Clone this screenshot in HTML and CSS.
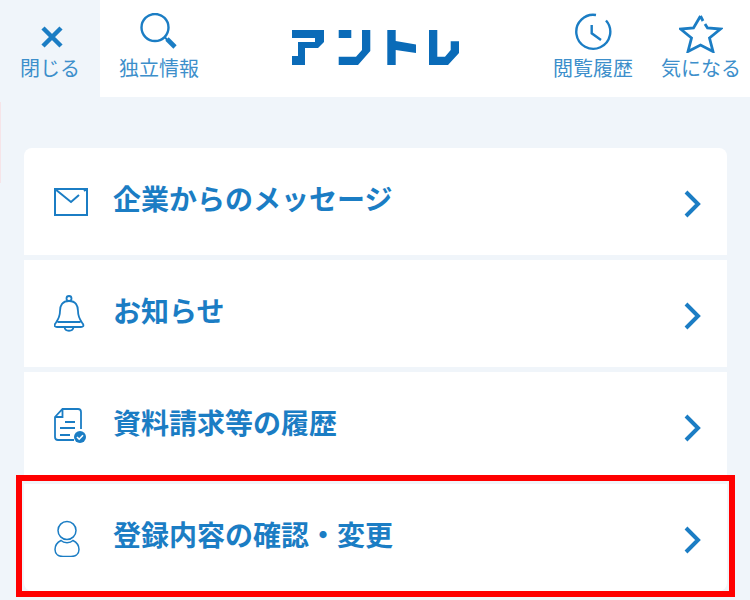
FILE: index.html
```html
<!DOCTYPE html>
<html lang="ja">
<head>
<meta charset="utf-8">
<title>メニュー</title>
<link rel="stylesheet" href="styles.css">
</head>
<body>
<header class="header">
  <a class="nav-item nav-close">
    <svg class="nav-icon" width="40" height="40" viewBox="0 0 40 40"><path d="M13 15 31 33M31 15 13 33" class="st" stroke-width="4.500"/></svg>
    <span>閉じる</span>
  </a>
  <a class="nav-item nav-search">
    <svg class="nav-icon" width="40" height="40" viewBox="0 0 40 40"><circle cx="16" cy="14.500" r="13.500" class="st" stroke-width="2.400"/><path d="M25.500 24 29 27.500" class="st" stroke-width="2"/><path d="M28 26 36 34" class="st" stroke-width="4.600"/></svg>
    <span>独立情報</span>
  </a>
  <div class="logo-wrap">
    <svg class="logo" width="168" height="36" viewBox="0 0 168 36"><path class="logo-f" d="M0 0H32V12L26 18H13V35H0V26H6V12H23V8H0Z"/><path class="logo-f" d="M46.700 0H59.300V8H46.700ZM70 0H78.300V21L66 35H46.700V26.700H64L70 20Z"/><path class="logo-f" d="M95.300 0H103.700V11L124 14.500V23L103.700 20V35H95.300Z"/><path class="logo-f" d="M137 0H145.300V26.700H153L158.700 20V11.300H167V23L156 35H137Z"/></svg>
  </div>
  <a class="nav-item nav-history">
    <svg class="nav-icon" width="40" height="40" viewBox="0 0 40 40"><path d="M33 7.500A17 17 0 1 1 23 2" class="st" stroke-width="2.400"/><path d="M18.700 12V20.300L28 27" class="st" stroke-width="2.400"/></svg>
    <span>閲覧履歴</span>
  </a>
  <a class="nav-item nav-fav">
    <svg class="nav-icon" width="44" height="40" viewBox="0 0 44 40"><path d="M21.500 3 14.500 15 1.500 16 12.500 25 9 38.500 21.500 32 34 38.500 30.500 25 41.500 16 28.500 15 26 11M21.500 3 24 8" class="st" stroke-width="2.800"/></svg>
    <span>気になる</span>
  </a>
</header>
<main class="list">
  <a class="row">
    <svg class="row-icon" width="36" height="30" viewBox="1 0 36 30"><path d="M2 2H34V28H2ZM2 2 18 15 26 8M31 4 34 2" class="st" stroke-width="2"/></svg>
    <span class="label">企業からのメッセージ</span>
    <svg class="chev" width="20" height="28" viewBox="0 0 20 28"><path d="M3 2 15 14 3 26" class="st" stroke-width="4"/></svg>
  </a>
  <a class="row">
    <svg class="row-icon" width="36" height="40" viewBox="3 0 36 40"><circle cx="18" cy="4.500" r="2.500" class="st" stroke-width="1.800"/><path d="M18 7C11 7 9 12 9 17 9 24 6 27 4 30 3 32 4 33 6 33H30C32 33 33 32 32 30 30 27 27 24 27 17 27 12 25 7 18 7ZM6.500 28H29.500M13.500 33C14 38 22 38 22.500 33" class="st" stroke-width="1.800"/></svg>
    <span class="label">お知らせ</span>
    <svg class="chev" width="20" height="28" viewBox="0 0 20 28"><path d="M3 2 15 14 3 26" class="st" stroke-width="4"/></svg>
  </a>
  <a class="row">
    <svg class="row-icon" width="33" height="36" viewBox="0 0 33 36"><path d="M20 32H4C2 32 1 31 1 29V9L8.500 1H24C26 1 27 2 27 4V21M1 9H8.500V1M11 14H21M6 20H21M6 27H16" class="st" stroke-width="1.800"/><circle cx="26" cy="29" r="6" class="fill"/><path d="M23 29 25.200 31.200 29 27.200" class="st-w" stroke-width="1.600"/></svg>
    <span class="label">資料請求等の履歴</span>
    <svg class="chev" width="20" height="28" viewBox="0 0 20 28"><path d="M3 2 15 14 3 26" class="st" stroke-width="4"/></svg>
  </a>
  <a class="row">
    <svg class="row-icon" width="26" height="38" viewBox="0 -1.500 26 38"><circle cx="13" cy="10" r="9" class="st" stroke-width="1.500"/><path d="M7 20C3 22 1 26 1 29 1 34 5 36 9 36H17C21 36 25 34 25 29 25 26 23 22 19 20 16 23 10 23 7 20Z" class="st" stroke-width="1.500"/></svg>
    <span class="label">登録内容の確認・変更</span>
    <svg class="chev" width="20" height="28" viewBox="0 0 20 28"><path d="M3 2 15 14 3 26" class="st" stroke-width="4"/></svg>
  </a>
</main>
<div class="highlight"></div>
<div class="edge-mark"></div>
</body>
</html>
```
FILE: styles.css
```css
* { box-sizing: border-box; }
html, body { margin: 0; padding: 0; }
body {
  width: 750px;
  height: 600px;
  overflow: hidden;
  position: relative;
  background: #f0f5fa;
  font-family: "Noto Sans CJK JP", "Noto Sans", sans-serif;
  color: #1b7dc4;
}
.header {
  display: flex;
  height: 97px;
  background: #fff;
}
.nav-item {
  flex: none;
  display: flex;
  flex-direction: column;
  align-items: center;
  padding-top: 13px;
  font-size: 20px;
  line-height: 26px;
  color: #3d8fcb;
  white-space: nowrap;
}
.nav-icon { display: block; margin-bottom: 2px; }
.nav-close { width: 100px; background: #f0f5fa; }
.nav-search { width: 80px; margin-left: 19px; }
.nav-history { width: 80px; }
.nav-fav { width: 80px; margin-left: 28px; margin-right: 9px; }
.logo-wrap { flex: 1; padding: 30px 0 0 93px; }
.logo { display: block; }
.logo-f { fill: #0a6bb8; }
.st { fill: none; stroke: #1b7dc4; }
.st-w { fill: none; stroke: #fff; }
.fill { fill: #1b7dc4; }
.list {
  display: flex;
  flex-direction: column;
  gap: 5px;
  margin: 51px 23px 0 24px;
}
.row {
  display: grid;
  grid-template-columns: 59px 1fr auto;
  align-items: center;
  height: 107px;
  padding: 0 24px 0 30px;
  background: #fff;
}
.row:first-child { border-radius: 8px 8px 0 0; }
.row:last-child { border-radius: 0 0 8px 8px; }
.label {
  font-size: 28px;
  font-weight: 700;
  line-height: 32px;
  margin-top: -8px;
}
.chev { margin-top: 4px; }
.highlight {
  position: absolute;
  left: 16px;
  top: 475px;
  width: 719px;
  height: 122px;
  border: 6px solid #f00;
}
.edge-mark {
  position: absolute;
  left: 0;
  top: 102px;
  width: 1px;
  height: 81px;
  background: #f6e4e8;
}
```
